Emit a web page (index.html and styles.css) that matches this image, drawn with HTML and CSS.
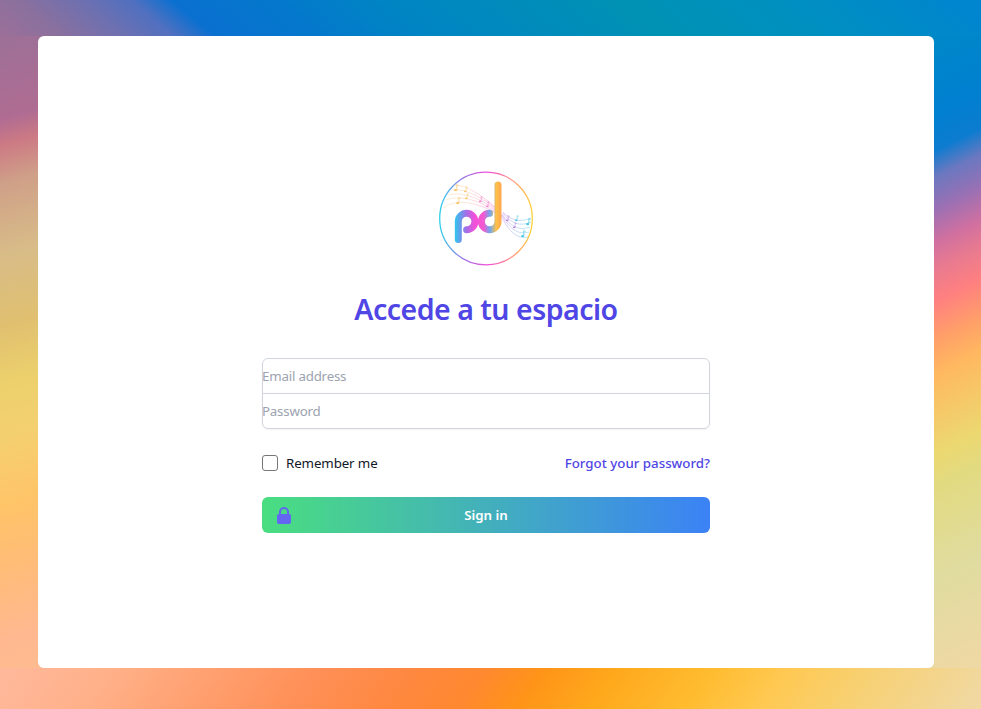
FILE: index.html
```html
<!DOCTYPE html>
<html lang="es">
<head>
    <meta charset="UTF-8">
    <meta name="viewport" content="width=device-width, initial-scale=1.0">
    <title>Accede a tu espacio</title>
    <link rel="stylesheet" href="styles.css">
</head>
<body>
    <main class="card">
        <div class="login">
            <svg class="logo" width="96" height="96" viewBox="0 0 96 96" fill="none" aria-label="pd">
                <defs>
                    <linearGradient id="ring" x1="0" y1="0" x2="1" y2="0">
                        <stop offset="0" stop-color="#2fd0e8"/>
                        <stop offset="0.25" stop-color="#9a78e8"/>
                        <stop offset="0.52" stop-color="#f24fd8"/>
                        <stop offset="0.8" stop-color="#ff9a78"/>
                        <stop offset="1" stop-color="#ffd23c"/>
                    </linearGradient>
                    <linearGradient id="letters" gradientUnits="userSpaceOnUse" x1="17" y1="0" x2="63" y2="0">
                        <stop offset="0" stop-color="#2fc6ee"/>
                        <stop offset="0.24" stop-color="#a070e8"/>
                        <stop offset="0.43" stop-color="#f44fd8"/>
                        <stop offset="0.62" stop-color="#f45ad0"/>
                        <stop offset="0.76" stop-color="#70a8ee"/>
                        <stop offset="0.9" stop-color="#ffc048"/>
                        <stop offset="1" stop-color="#ffa850"/>
                    </linearGradient>
                    <linearGradient id="staffLeft" gradientUnits="userSpaceOnUse" x1="5" y1="0" x2="58" y2="0">
                        <stop offset="0" stop-color="#f9d88a"/>
                        <stop offset="0.5" stop-color="#f9b4a0"/>
                        <stop offset="1" stop-color="#f060c8"/>
                    </linearGradient>
                    <linearGradient id="staffRight" gradientUnits="userSpaceOnUse" x1="63" y1="0" x2="93" y2="0">
                        <stop offset="0" stop-color="#c070e8"/>
                        <stop offset="1" stop-color="#30c8dc"/>
                    </linearGradient>
                    <symbol id="note" viewBox="0 0 6 8" overflow="visible">
                        <path d="M3.800 0.500 V6 M3.800 0.500 L5.600 1.500" stroke="currentColor" stroke-width="0.7"/>
                        <ellipse cx="2.600" cy="6.200" rx="1.500" ry="1.100" fill="currentColor"/>
                    </symbol>
                </defs>
                <circle cx="48" cy="47.500" r="46.300" stroke="url(#ring)" stroke-width="1.300"/>
                <g class="staff" stroke="url(#staffLeft)" stroke-width="0.500">
                    <path d="M16 14 C28 14 44 24 58 37"/>
                    <path d="M13 19 C26 17 44 26 58 38"/>
                    <path d="M10 24 C24 20 44 28 58 39.500"/>
                    <path d="M8 29 C24 23 44 31 58 41"/>
                    <path d="M5 37 C20 26 42 33 58 42"/>
                </g>
                <g class="staff" stroke="url(#staffRight)" stroke-width="0.500">
                    <path d="M65 41 C72 49 82 52 93 47"/>
                    <path d="M65 42 C72 52 82 56 93 51"/>
                    <path d="M64 43 C72 56 82 60 92 56"/>
                    <path d="M64 44 C72 59 81 64 91 61"/>
                    <path d="M63 44 C71 62 80 68 90 66"/>
                </g>
                <g class="notes-yellow">
                    <use href="#note" x="15" y="13" width="6" height="8"/>
                    <use href="#note" x="25" y="15" width="5" height="7"/>
                    <use href="#note" x="17" y="26" width="6" height="8"/>
                    <use href="#note" x="26" y="22" width="5" height="7"/>
                </g>
                <g class="notes-pink">
                    <use href="#note" x="40" y="25" width="5" height="7"/>
                    <use href="#note" x="47" y="30" width="5" height="7"/>
                </g>
                <g class="notes-purple">
                    <use href="#note" x="67" y="44" width="5" height="7"/>
                    <use href="#note" x="74" y="51" width="5" height="7"/>
                </g>
                <g class="notes-cyan">
                    <use href="#note" x="87" y="47" width="6" height="8"/>
                    <use href="#note" x="82" y="59" width="6" height="8"/>
                    <use href="#note" x="76" y="44" width="5" height="7"/>
                </g>
                <path d="M20.300 68.500 V50.500 a8.300 8.300 0 1 1 8.300 8.300" stroke="url(#letters)" stroke-width="7" stroke-linecap="round"/>
                <path d="M60 14 V50.500 a8.300 8.300 0 1 1 -8.300 -8.300" stroke="url(#letters)" stroke-width="7" stroke-linecap="round"/>
            </svg>
            <h1 class="title">Accede a tu espacio</h1>
            <form class="form">
                <div class="fields">
                    <input class="field" type="email" placeholder="Email address">
                    <input class="field field-last" type="password" placeholder="Password">
                </div>
                <div class="options">
                    <label class="remember"><span class="check"></span>Remember me</label>
                    <a class="forgot" href="#">Forgot your password?</a>
                </div>
                <button class="submit" type="button">
                    <svg class="lock" width="20" height="20" viewBox="0 0 20 20" fill="#6366f1">
                        <path fill-rule="evenodd" d="M5 9V7a5 5 0 0 1 10 0v2a2 2 0 0 1 2 2v6a2 2 0 0 1-2 2H5a2 2 0 0 1-2-2v-6a2 2 0 0 1 2-2zm8-2v2H7V7a3 3 0 0 1 6 0z" clip-rule="evenodd"/>
                    </svg>
                    Sign in
                </button>
            </form>
        </div>
    </main>
</body>
</html>
```

FILE: styles.css
```css
* {
    box-sizing: border-box;
}

html, body {
    height: 100%;
}

/* only the frame around the card shows, so each side gets its own strip */
body {
    margin: 0;
    padding: 36px 47px 41px 38px;
    font-family: "Noto Sans", "Open Sans", sans-serif;
    color: #111827;
    background-color: #ffb070;
    background-repeat: no-repeat;
    background-size: 100% 36px, 100% 41px, 46px 632px, 55px 632px;
    background-position: 0 0, 0 100%, 0 36px, 100% 36px;
    background-image:
        linear-gradient(40deg, #9c7098 0%, #8a709e 6%, #6e70b0 12%, #5070c0 17%, #0a70d0 21%, #0478cc 31%, #0084c4 41%, #0092b4 65%, #0090c0 80%, #0084d0 100%),
        linear-gradient(125deg, #ffb89a 1.500%, #ffb088 11.400%, #ffa070 21.300%, #ff9058 31.200%, #ff8840 41.100%, #ff8830 48%, #ff9418 54%, #ffa81c 61%, #ffbc30 70.800%, #ffc850 77.700%, #f8d070 85.700%, #f0d8a0 98.600%),
        linear-gradient(165deg, #9c7098 0%, #b06c92 13%, #cc7a84 17%, #cfa088 23%, #d8bc88 34%, #e0c070 45%, #ecd06c 54%, #f4d070 62%, #ffc468 73%, #ffbc78 83%, #ffb890 94%, #ffbc90 100%),
        linear-gradient(154deg, #0088c8 0%, #0080d0 12%, #0c7cd0 18%, #6a78c0 22%, #9a70b4 27%, #d070a0 32%, #e87a90 36%, #ff8080 41%, #ffa068 47%, #ffb860 52%, #f6c868 58%, #ecd870 64%, #e2da80 69%, #e0dca0 83%, #eed8a4 98%);
}

.card {
    display: flex;
    align-items: center;
    justify-content: center;
    height: 632px;
    background: #fff;
    border-radius: 6px;
}

.login {
    display: flex;
    flex-direction: column;
    align-items: center;
    width: 448px;
}

.logo {
    display: block;
}

.staff { opacity: 0.75; }
.notes-yellow { color: #f6c050; opacity: 0.85; }
.notes-pink { color: #f070c8; opacity: 0.85; }
.notes-purple { color: #b070e0; opacity: 0.85; }
.notes-cyan { color: #30c0dc; opacity: 0.85; }

.title {
    margin: 24px 0 0;
    font-size: 28.5px;
    line-height: 36px;
    font-weight: 600;
    letter-spacing: -0.5px;
    color: #4f46e5;
}

.form {
    width: 100%;
    margin-top: 31px;
}

.fields {
    border-radius: 6px;
    box-shadow: 0 1px 2px rgba(0, 0, 0, 0.05);
}

.field {
    display: block;
    width: 100%;
    height: 36px;
    margin: 0;
    padding: 0;
    border: 1px solid #d1d5db;
    border-radius: 6px 6px 0 0;
    font: inherit;
    font-size: 13.3px;
    letter-spacing: -0.2px;
    text-indent: -1px;
    background: #fff;
}

.field-last {
    margin-top: -1px;
    border-radius: 0 0 6px 6px;
}

.field::placeholder {
    color: #9ca3af;
    opacity: 1;
}

.options {
    display: flex;
    align-items: center;
    justify-content: space-between;
    margin-top: 24px;
    font-size: 13.3px;
    line-height: 20px;
}

.remember {
    display: flex;
    align-items: center;
    gap: 8px;
    letter-spacing: -0.1px;
}

.check {
    width: 16px;
    height: 16px;
    border: 1px solid #767676;
    border-radius: 3px;
    background: #fff;
}

.forgot {
    font-weight: 500;
    color: #4f46e5;
    text-decoration: none;
}

.submit {
    position: relative;
    display: block;
    width: 100%;
    height: 36px;
    margin-top: 24px;
    padding: 0;
    border: 0;
    border-radius: 6px;
    font: inherit;
    font-size: 13.3px;
    font-weight: 600;
    color: #fff;
    background: linear-gradient(90deg, #4ade80, #3b82f6);
}

.lock {
    position: absolute;
    left: 12px;
    top: 8px;
}
```
